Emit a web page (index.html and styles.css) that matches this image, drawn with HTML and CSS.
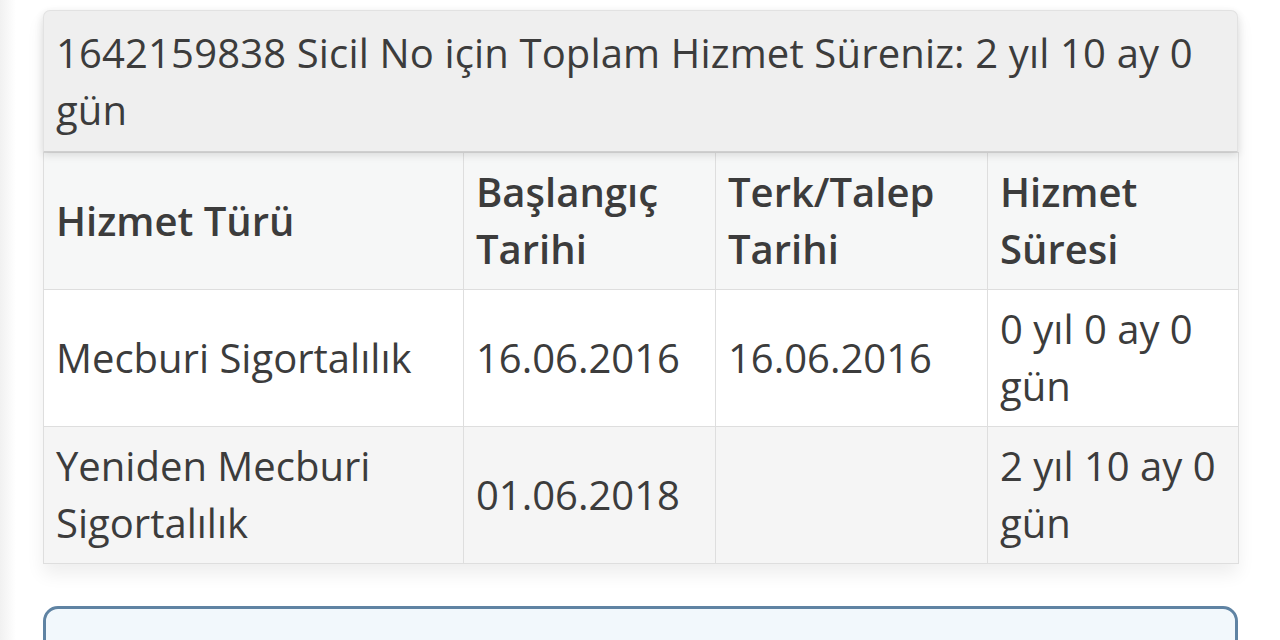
FILE: index.html
```html
<!DOCTYPE html>
<html lang="tr">
<head>
<meta charset="utf-8">
<title>Hizmet Dökümü</title>
<link rel="stylesheet" href="styles.css">
</head>
<body>
<div class="page">
  <div class="panel">
    <div class="panel-heading">1642159838 Sicil No için Toplam Hizmet Süreniz: 2 yıl 10 ay 0 gün</div>
    <table class="svc">
      <colgroup>
        <col class="c1"><col class="c2"><col class="c3"><col class="c4">
      </colgroup>
      <thead>
        <tr>
          <th>Hizmet Türü</th>
          <th>Başlangıç Tarihi</th>
          <th>Terk/Talep Tarihi</th>
          <th>Hizmet Süresi</th>
        </tr>
      </thead>
      <tbody>
        <tr>
          <td>Mecburi Sigortalılık</td>
          <td>16.06.2016</td>
          <td>16.06.2016</td>
          <td>0 yıl 0 ay 0 gün</td>
        </tr>
        <tr class="odd">
          <td>Yeniden Mecburi Sigortalılık</td>
          <td>01.06.2018</td>
          <td></td>
          <td>2 yıl 10 ay 0 gün</td>
        </tr>
      </tbody>
    </table>
  </div>
  <div class="info-box"></div>
</div>
</body>
</html>
```
FILE: styles.css
```css
html, body {
  margin: 0;
  padding: 0;
}
body {
  width: 1280px;
  height: 640px;
  overflow: hidden;
  background: linear-gradient(to right, #f1f1f1 0, #f8f8f8 8px, #ffffff 16px);
  font-family: "Open Sans", "Liberation Sans", sans-serif;
  color: #3c3c3c;
  font-size: 40px;
  line-height: 57px;
}
.page {
  padding: 10px 42px 0 43px;
}
.panel {
  background: #fff;
  border-radius: 7px 7px 0 0;
  box-shadow: 0 10px 18px rgba(0, 0, 0, 0.07);
}
.panel-heading {
  position: relative;
  z-index: 1;
  background: #efefef;
  border: 1px solid #e2e2e2;
  border-bottom: 1px solid #cfcfcf;
  border-radius: 7px 7px 0 0;
  padding: 13px 12px 13px 12px;
  letter-spacing: 0.15px;
  box-shadow: 0 3px 8px rgba(0, 0, 0, 0.12);
}
.svc {
  width: 100%;
  border-collapse: collapse;
  table-layout: fixed;
}
.c1 { width: 420px; }
.c2 { width: 252px; }
.c3 { width: 272px; }
.c4 { width: 251px; }
.svc th, .svc td {
  border: 1px solid #dedede;
  padding: 10px 12px 12px 12px;
  text-align: left;
  vertical-align: middle;
}
.svc th {
  font-weight: 600;
  background: #f6f7f7;
  color: #3c3c3c;
}
.svc td {
  background: #ffffff;
}
.svc tr.odd td {
  background: #f5f5f5;
}
.info-box {
  margin-top: 42px;
  height: 80px;
  border: 3px solid #5f83a3;
  border-radius: 15px;
  background: #f2f8fc;
}
```
